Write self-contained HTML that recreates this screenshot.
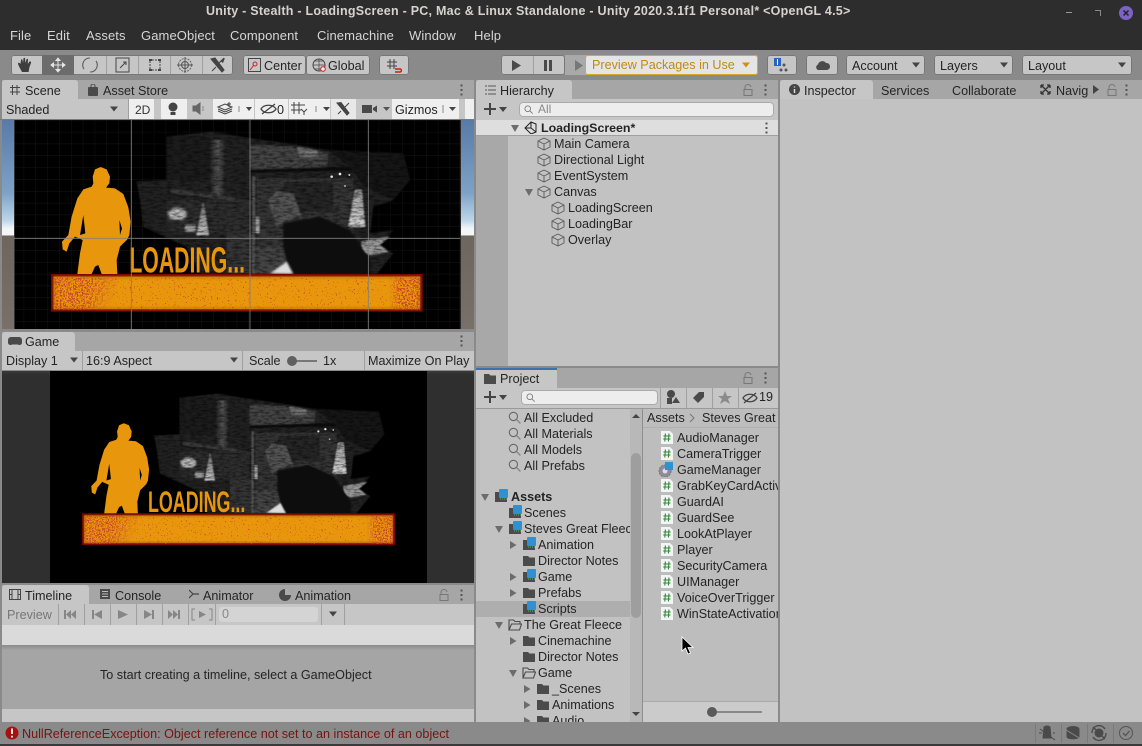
<!DOCTYPE html>
<html><head><meta charset="utf-8"><title>Unity - Stealth - LoadingScreen</title>
<style>
html,body{margin:0;padding:0;background:#8a8a8a}
#r{position:relative;width:1142px;height:746px;overflow:hidden;background:#8a8a8a;font-family:"Liberation Sans",sans-serif;font-size:12.6px;color:#242424}
#r div,#r span,#r svg{position:absolute}
.t{white-space:nowrap;line-height:16px}
.m{color:#d6d6d6;top:28px;font-size:13px;letter-spacing:.1px}
.b{background:#c6c6c6;border-radius:3px;box-shadow:0 0 0 1px #777 inset;height:20px;top:55px}
.ic{overflow:visible}
.tb{background:#a6a6a6}
.tab{background:#c6c6c6;border-radius:3px 3px 0 0}
.s{width:1px;background:#a0a0a0}
.w{background:#efefef}
</style></head><body><div id="r">
<svg width="0" height="0" style="left:0;top:0"><defs>
<symbol id="cube" viewBox="0 0 14 14"><path d="M7 1L13 4V10L7 13L1 10V4ZM1 4L7 7L13 4M7 7V13" fill="none" stroke="#5a5a5a" stroke-width=".9"/></symbol>
<symbol id="f" viewBox="0 0 14 14"><path d="M1 2H6L7.500 3.500H13V12H1Z" fill="#4b4b4b"/></symbol>
<symbol id="fo" viewBox="0 0 14 14"><path d="M1 12V2H5.500L7 3.500H12V6M1 12L3.500 6H13.500L11.500 12Z" fill="#c2c2c2" stroke="#4b4b4b" stroke-width="1.100"/></symbol>
<symbol id="fb" viewBox="0 0 14 14"><path d="M1 3H6L7 4H13V13H1Z" fill="#4b4b4b"/><rect x="5" y="0" width="9" height="9" rx="1" fill="#2f90d2"/><path d="M6 10H13" stroke="#55b060" stroke-dasharray="1 1"/></symbol>
<symbol id="sc" viewBox="0 0 12 13"><path d="M0 0H9L12 3V13H0Z" fill="#f4f4f4"/><path d="M4.400 2.500L3.800 10.500M8 2.500L7.400 10.500M2.400 5H9.600M2.200 8H9.400" stroke="#2c8a3c" stroke-width="1.100" fill="none"/></symbol>
<symbol id="mg" viewBox="0 0 12 12"><circle cx="5" cy="5" r="3.800" fill="none" stroke="#666"/><path d="M8 8L11.500 11.500" stroke="#888" stroke-width="1.300"/></symbol>
<symbol id="lock" viewBox="0 0 10 12"><path d="M2 5V3A3 2.500 0 0 1 8 3" fill="none" stroke="#777"/><rect x="1" y="5.500" width="8" height="6" fill="none" stroke="#777"/></symbol>
<symbol id="dots" viewBox="0 0 3 12"><path d="M.5 .5h2v2h-2zM.5 5h2v2h-2zM.5 9.500h2v2h-2z" fill="#555"/></symbol>
<symbol id="dn" viewBox="0 0 8 8"><path d="M0 1.500H8L4 6.500Z" fill="#444"/></symbol>
<symbol id="dg" viewBox="0 0 8 8"><path d="M0 1H8L4 8Z" fill="#6c6c6c"/></symbol>
<symbol id="rg" viewBox="0 0 8 8"><path d="M1 0V8L7.500 4Z" fill="#6c6c6c"/></symbol>
<pattern id="grid" width="35.500" height="35.500" patternUnits="userSpaceOnUse"><path d="M0 0V35.500M0 0H35.500" stroke="#1d1d1d" stroke-width="2" fill="none"/></pattern>
<filter id="sp" x="0" y="0" width="100%" height="100%"><feTurbulence type="fractalNoise" baseFrequency=".2" numOctaves="3" seed="4"/><feColorMatrix values="0 0 0 0 .58 0 0 0 0 .06 0 0 0 0 .02 0 0 0 30 -15.500"/></filter>
<filter id="sp2" x="0" y="0" width="100%" height="100%"><feTurbulence type="fractalNoise" baseFrequency=".18" numOctaves="3" seed="9"/><feColorMatrix values="0 0 0 0 .58 0 0 0 0 .06 0 0 0 0 .02 0 0 0 30 -21"/></filter>
<filter id="nz" x="0" y="0" width="100%" height="100%"><feTurbulence type="fractalNoise" baseFrequency=".05 .15" numOctaves="3" seed="2"/><feColorMatrix values="0 0 0 0 0 0 0 0 0 0 0 0 0 0 0 0 0 0 1.200 -.45"/></filter>
<filter id="bl"><feGaussianBlur stdDeviation="3"/></filter>
<filter id="bl2"><feGaussianBlur stdDeviation="2"/></filter>
<linearGradient id="col" x1="0" x2="1" y1="0" y2="0"><stop offset="0" stop-color="#222"/><stop offset=".5" stop-color="#555"/><stop offset="1" stop-color="#1e1e1e"/></linearGradient>
<linearGradient id="cone" x1="0" x2="0" y1="0" y2="1"><stop offset="0" stop-color="#666"/><stop offset="1" stop-color="#c4c4c4"/></linearGradient>
<linearGradient id="cone2" x1="0" x2="0" y1="0" y2="1"><stop offset="0" stop-color="#999"/><stop offset="1" stop-color="#d4d4d4"/></linearGradient>
<linearGradient id="lf" gradientUnits="userSpaceOnUse" x1="162" x2="345" y1="473" y2="540"><stop offset="0" stop-color="#fff"/><stop offset=".55" stop-color="#fff"/><stop offset="1" stop-color="#000"/></linearGradient>
<linearGradient id="rf" gradientUnits="userSpaceOnUse" x1="1165" x2="1200" y1="0" y2="0"><stop offset="0" stop-color="#000"/><stop offset="1" stop-color="#fff"/></linearGradient>
<mask id="ml" maskUnits="userSpaceOnUse" x="160" y="470" width="200" height="102"><rect x="160" y="470" width="200" height="102" fill="url(#lf)"/></mask>
<mask id="mr" maskUnits="userSpaceOnUse" x="1160" y="470" width="102" height="102"><rect x="1160" y="470" width="102" height="102" fill="url(#rf)"/></mask>
<g id="art">
<g filter="url(#bl2)">
<path d="M500 50L640 35L720 50L890 75L980 90L1210 100L1230 180L1180 240L1120 260L1110 340L1180 330L1140 375L1180 400L1130 462H600L560 380L430 320L420 240L410 185L500 180Z" fill="#222"/>
<rect x="500" y="50" width="130" height="130" fill="#1a1a1a"/>
<rect x="630" y="60" width="48" height="175" fill="url(#col)"/>
<path d="M750 75L900 80L985 100L980 140L750 150Z" fill="#444"/>
<path d="M890 82L950 92L960 112L900 110Z" fill="#777"/>
<rect x="770" y="175" width="290" height="205" fill="#343434"/>
<rect x="850" y="185" width="150" height="90" fill="#282828"/>
<path d="M750 148L1200 136V150L750 158Z" fill="#101010"/>
<path d="M985 90L1210 100L1230 180L1180 240L1090 200L1060 150Z" fill="#141414"/>
<path d="M510 205L720 235V245L510 218Z" fill="#3a3a3a"/>
<rect x="500" y="240" width="250" height="100" fill="#2e2e2e"/>
<rect x="680" y="340" width="80" height="122" fill="#343434"/>
<ellipse cx="532" cy="282" rx="28" ry="18" fill="#bbb" filter="url(#bl)"/>
<rect x="555" y="315" width="32" height="20" fill="#999"/>
<path d="M610 240L590 345H626Z" fill="url(#cone)"/>
<path d="M1065 210H1085L1095 320H1045Z" fill="url(#cone2)"/>
<rect x="757" y="170" width="8" height="292" fill="#5a5a5a"/>
<rect x="767" y="380" width="100" height="82" fill="#444"/>
<rect x="768" y="290" width="10" height="50" fill="#aaa"/>
<path d="M805 240L830 215L880 220L905 290L860 300L830 320Z" fill="#555"/>
<path d="M1085 365L1170 350L1140 375L1165 395L1110 405L1085 395Z" fill="#999"/>
</g>
<rect x="410" y="35" width="830" height="430" filter="url(#nz)"/>
<path d="M850 310L960 290L1050 330L1110 420V462H870L850 380Z" fill="#0a0a0a" filter="url(#bl2)"/>
<path d="M810 460L860 425L880 462Z" fill="#ddd" filter="url(#bl)"/>
<circle cx="995" cy="170" r="4" fill="#ddd"/><circle cx="1020" cy="162" r="4" fill="#eee"/><circle cx="1048" cy="165" r="3" fill="#ccc"/><circle cx="1035" cy="198" r="3" fill="#aaa"/>
<path d="M278 170L285 148L302 141L320 148L330 170L328 190L318 203L345 205L370 222L385 262L392 305L388 345L382 358L360 380L350 420L352 462H305L295 435L285 440L275 462H232L240 400L248 360L225 350L208 370L200 395L188 388L186 365L205 345L215 290L232 235L250 208L275 200L280 190Z" fill="#e8960c"/>
<path d="M250 285L256 340L240 345Z" fill="#000"/><path d="M358 300L366 325L360 345Z" fill="#000"/>
<rect x="157" y="466" width="1107" height="105" fill="#e8960c" stroke="#7c0500" stroke-width="8"/>
<rect x="163" y="472" width="1095" height="93" fill="none" stroke="#bb7a08" stroke-width="5" filter="url(#bl)"/>
<g mask="url(#ml)"><rect x="162" y="473" width="190" height="97" filter="url(#sp)"/></g>
<rect x="340" y="473" width="820" height="97" filter="url(#sp2)"/>
<g mask="url(#mr)"><rect x="1165" y="473" width="95" height="97" filter="url(#sp)"/></g>
</g>
</defs></svg>

<!-- title / menu -->
<div style="left:0;top:0;width:1142px;height:50px;background:#2d2d2d"></div>
<div class="t" style="left:206px;top:3px;width:644px;text-align:center;color:#d6d3ce;font-weight:bold;font-size:12.500px;letter-spacing:.24px">Unity - Stealth - LoadingScreen - PC, Mac &amp; Linux Standalone - Unity 2020.3.1f1 Personal* &lt;OpenGL 4.5&gt;</div>
<div style="left:1066px;top:12px;width:6px;height:1px;background:#999"></div>
<div style="left:1095px;top:10px;width:5px;height:5px;border-top:1px solid #888;border-right:1px solid #888"></div>
<div style="left:1119px;top:6px;width:14px;height:14px;border-radius:50%;background:#7b62c4"></div>
<svg style="left:1119px;top:6px" width="14" height="14"><path d="M4.500 4.500L9.500 9.500M9.500 4.500L4.500 9.500" stroke="#222" stroke-width="1.500"/></svg>
<div class="t m" style="left:10px">File</div><div class="t m" style="left:47px">Edit</div><div class="t m" style="left:86px">Assets</div><div class="t m" style="left:141px">GameObject</div><div class="t m" style="left:230px">Component</div><div class="t m" style="left:317px">Cinemachine</div><div class="t m" style="left:409px">Window</div><div class="t m" style="left:474px">Help</div>

<!-- main toolbar -->
<div class="b" style="left:11px;width:222px"></div>
<div style="left:42px;top:55px;width:32px;height:20px;background:#6c6c6c"></div>
<div class="s" style="left:106px;top:56px;height:18px"></div><div class="s" style="left:138px;top:56px;height:18px"></div><div class="s" style="left:170px;top:56px;height:18px"></div><div class="s" style="left:202px;top:56px;height:18px"></div>
<svg style="left:11px;top:55px" width="222" height="20">
<path d="M11 17C9 13 7 10 7 8.500C7 7.500 8.500 7.500 9.500 9L10 5C10 4 11.500 4 11.500 5L12 8L12.500 3.500C12.500 2.500 14 2.500 14 3.500L14.500 8L15.500 4.500C15.500 3.500 17 3.500 17 4.500L16.800 9L18.500 6.500C19.500 6 20.500 7 20 8L18.500 12C18 14 18 15.500 17.500 17Z" fill="#3d3d3d"/>
<path d="M47 3V17M40 10H54M47 3L45 5.500H49ZM47 17L45 14.500H49ZM40 10L42.500 8V12ZM54 10L51.500 8V12Z" stroke="#e6e6e6" fill="#e6e6e6"/>
<path d="M73 14A7 7 0 0 1 79 3M85 6A7 7 0 0 1 79 17" fill="none" stroke="#5c5c5c" stroke-width="1.100"/>
<path d="M105 3H118V17H105ZM109 13L115 7M112 7H115V10" fill="none" stroke="#444"/>
<path d="M138 4H141V6H138ZM147 4H150V6H147ZM138 14H141V16H138ZM147 14H150V16H147Z" fill="#444"/><path d="M141 5H147M141 15H147M139 6V14M149 6V14" stroke="#444" stroke-dasharray="2 1" fill="none"/>
<circle cx="174" cy="10" r="6.500" fill="none" stroke="#666" stroke-dasharray="2 1"/><circle cx="174" cy="10" r="3.500" fill="none" stroke="#555"/><path d="M174 2V18M166 10H182" stroke="#555"/>
<path d="M200 4L204 3L213 15L211 17ZM213 3L206 10M201 16L205 12" fill="#444" stroke="#444" stroke-width="1.100"/><path d="M209 6L214 3L212 8Z" fill="#444"/>
</svg>
<div class="b" style="left:243px;width:63px"></div><div class="b" style="left:306px;width:64px"></div>
<svg style="left:248px;top:58px" width="14" height="14"><rect x=".5" y=".5" width="12" height="13" fill="none" stroke="#444"/><circle cx="7" cy="6" r="2" fill="none" stroke="#c22"/><path d="M2 12L6 7" stroke="#c22"/></svg>
<div class="t" style="left:264px;top:58px">Center</div>
<svg style="left:312px;top:58px" width="15" height="15"><circle cx="7" cy="7" r="6" fill="none" stroke="#444"/><path d="M1 7H13M7 1V13M3 3H11M3 11H11" stroke="#444" fill="none" stroke-width=".7"/><circle cx="11" cy="11" r="2.300" fill="#eee" stroke="#c22"/></svg>
<div class="t" style="left:328px;top:58px">Global</div>
<div class="b" style="left:379px;width:30px"></div>
<svg style="left:386px;top:58px" width="16" height="15"><path d="M4 1V11M8 1V11M1 4H11M1 8H11" stroke="#444" fill="none"/><path d="M9 11H14M9 14H14A1.500 1.500 0 0 0 14 11" stroke="#c21" stroke-width="1.500" fill="none"/></svg>

<div class="b" style="left:501px;width:64px"></div><div class="s" style="left:533px;top:56px;height:18px"></div>
<svg style="left:511px;top:59px" width="46" height="13"><path d="M1 1V12L10 6.500Z" fill="#4a4a4a"/><path d="M33 1H36V12H33ZM38 1H41V12H38Z" fill="#4a4a4a"/></svg>
<div style="left:565px;top:55px;width:22px;height:20px;background:#a9a9a9"></div>
<svg style="left:575px;top:59px" width="10" height="13"><path d="M0 1V12L8 6.500Z" fill="#777"/></svg>
<div class="b" style="left:585px;width:173px;background:#e5e5e5;box-shadow:0 0 0 1px #dba531 inset"></div>
<div class="t" style="left:592px;top:57px;color:#c18a10">Preview Packages in Use</div>
<svg style="left:742px;top:61px" width="8" height="8"><path d="M0 1.500H8L4 6.500Z" fill="#d4900f"/></svg>
<div class="b" style="left:767px;width:30px"></div>
<svg style="left:773px;top:57px" width="18" height="16"><rect x="1" y="1" width="7" height="8" fill="#2a63c4"/><path d="M4.500 2V8" stroke="#fff"/><circle cx="11" cy="8" r="1.500" fill="#555"/><circle cx="8" cy="13" r="1.500" fill="#555"/><circle cx="13" cy="13" r="1.500" fill="#555"/></svg>
<div class="b" style="left:806px;width:32px"></div>
<svg style="left:815px;top:59px" width="15" height="12"><path d="M3 11A3 3 0 0 1 3 5.500A4.500 4.500 0 0 1 11 4A3.500 3.500 0 0 1 12 11Z" fill="#4a4a4a"/></svg>
<div class="b" style="left:846px;width:79px"></div><div class="t" style="left:852px;top:58px">Account</div><svg class="ic" style="left:912px;top:61px" width="8" height="8"><use href="#dn"/></svg>
<div class="b" style="left:934px;width:79px"></div><div class="t" style="left:940px;top:58px">Layers</div><svg class="ic" style="left:1000px;top:61px" width="8" height="8"><use href="#dn"/></svg>
<div class="b" style="left:1022px;width:110px"></div><div class="t" style="left:1028px;top:58px">Layout</div><svg class="ic" style="left:1118px;top:61px" width="8" height="8"><use href="#dn"/></svg>

<!-- Scene panel -->
<div class="tb" style="left:2px;top:80px;width:472px;height:19px"></div>
<div class="tab" style="left:2px;top:80px;width:76px;height:19px"></div>
<svg style="left:9px;top:84px" width="12" height="12"><path d="M3.500 1V11M8 1V11M1 3.500H11M1 8H11" stroke="#444" fill="none"/></svg>
<div class="t" style="left:25px;top:83px">Scene</div>
<svg style="left:88px;top:84px" width="10" height="12"><rect y="3" width="10" height="9" rx="1" fill="#4a4a4a"/><path d="M3 4V2A2 2 0 0 1 7 2V4" fill="none" stroke="#4a4a4a"/></svg>
<div class="t" style="left:103px;top:83px">Asset Store</div>
<svg style="left:460px;top:84px" width="3" height="12"><use href="#dots"/></svg>
<div style="left:2px;top:99px;width:472px;height:20px;background:#c6c6c6"></div>
<div class="t" style="left:6px;top:102px">Shaded</div><svg style="left:110px;top:105px" width="8" height="8"><use href="#dn"/></svg>
<div class="s" style="left:128px;top:99px;height:20px"></div>
<div class="w" style="left:129px;top:99px;width:25px;height:20px"></div><div class="t" style="left:135px;top:102px;font-size:12px;color:#333">2D</div>
<div class="w" style="left:161px;top:99px;width:26px;height:20px"></div>
<div class="w" style="left:213px;top:99px;width:41px;height:20px"></div>
<div class="w" style="left:255px;top:99px;width:33px;height:20px"></div>
<div class="w" style="left:289px;top:99px;width:41px;height:20px"></div>
<div style="left:331px;top:99px;width:25px;height:20px;background:#e8e8e8"></div>
<div class="w" style="left:392px;top:99px;width:67px;height:20px"></div>
<div class="w" style="left:465px;top:99px;width:9px;height:20px"></div>
<svg style="left:161px;top:99px" width="300" height="20">
<circle cx="12" cy="8" r="4.500" fill="#444"/><rect x="9.500" y="13" width="5" height="3" fill="#444"/>
<path d="M32 7H35L39 4V15L35 12H32Z" fill="#666" stroke="#666"/><path d="M42 7V12" stroke="#888"/>
<path d="M57 8L64 5L71 8L64 11ZM57 12L64 15L71 12M57 10L64 13L71 10" fill="none" stroke="#444"/><path d="M68 3V8M66 5H70" stroke="#444"/>
<path d="M78 7V13" stroke="#888"/><path d="M85 8H91L88 12Z" fill="#444"/>
<path d="M100 10C103 5 112 5 115 10C112 15 103 15 100 10ZM101 15L114 5" fill="none" stroke="#444" stroke-width="1.300"/>
<path d="M133 3V15M138 3V15M130 6H144M130 11H140M140 10L143 13V16M146 10L143 13" fill="none" stroke="#444"/>
<path d="M155 7V13" stroke="#888"/><path d="M162 8H169L165.500 12Z" fill="#444"/>
<path d="M176 4L180 3.500L188 14L186 16ZM188 4L182 10M177 15L180 12" fill="#444" stroke="#444"/>
<path d="M201 6H211V14H201ZM212 9L216 6.500V13.500L212 11Z" fill="#4a4a4a"/><path d="M222 8H229L225.500 12Z" fill="#555"/>
<path d="M282 6V14" stroke="#888"/><path d="M288 8H295L291.500 12Z" fill="#444"/>
</svg>
<div class="t" style="left:277px;top:102px">0</div>
<div class="t" style="left:395px;top:102px">Gizmos</div>
<div style="left:0;top:119px;width:476px;height:1px;background:#7a7a7a"></div>
<div style="left:2px;top:120px;width:472px;height:209px;background:linear-gradient(#587aa8 0,#7ea2c6 35%,#bcd6ea 48%,#f2f6f8 52%,#f4f6f6 55%,#6e655f 55.500%,#7a706a 100%);overflow:hidden"></div>
<svg style="left:14px;top:120px" width="447" height="209"><rect width="447" height="209" fill="#000"/></svg>
<svg style="left:2px;top:120px" width="472" height="209" viewBox="6 0 1416 627"><clipPath id="cs"><rect x="42" y="0" width="1339" height="627"/></clipPath><g clip-path="url(#cs)">
<rect x="42" y="0" width="1339" height="627" fill="url(#grid)"/>
<use href="#art"/>
<text x="388" y="458" font-family="Liberation Sans" font-weight="bold" font-size="107" fill="#e8960c" textLength="347" lengthAdjust="spacingAndGlyphs">LOADING...</text>
<path d="M42 0V627M394 0V627M750 0V627M1105 0V627M1381 0V627M42 355H1381" stroke="#808080" stroke-width="2.400" fill="none"/></g></svg>

<!-- Game panel -->
<div style="left:0;top:329px;width:476px;height:3px;background:#8a8a8a"></div>
<div class="tb" style="left:2px;top:332px;width:472px;height:19px"></div>
<div class="tab" style="left:2px;top:332px;width:73px;height:19px"></div>
<svg style="left:8px;top:336px" width="14" height="11"><path d="M3 1H11A3 3 0 0 1 14 4V7A2.500 2.500 0 0 1 10 8.500H4A2.500 2.500 0 0 1 0 7V4A3 3 0 0 1 3 1Z" fill="#4a4a4a"/></svg>
<div class="t" style="left:25px;top:334px">Game</div>
<svg style="left:460px;top:335px" width="3" height="12"><use href="#dots"/></svg>
<div style="left:2px;top:351px;width:472px;height:19px;background:#c6c6c6"></div>
<div class="t" style="left:6px;top:353px">Display 1</div><svg style="left:70px;top:356px" width="8" height="8"><use href="#dn"/></svg>
<div class="s" style="left:82px;top:351px;height:19px"></div>
<div class="t" style="left:86px;top:353px">16:9 Aspect</div><svg style="left:230px;top:356px" width="8" height="8"><use href="#dn"/></svg>
<div class="s" style="left:242px;top:351px;height:19px"></div>
<div class="t" style="left:249px;top:353px">Scale</div>
<div style="left:292px;top:360px;width:25px;height:2px;background:#777"></div><div style="left:287px;top:356px;width:10px;height:10px;border-radius:50%;background:#606060"></div>
<div class="t" style="left:323px;top:353px">1x</div>
<div class="s" style="left:364px;top:351px;height:19px"></div>
<div class="t" style="left:368px;top:353px">Maximize On Play</div>
<div style="left:2px;top:371px;width:472px;height:212px;background:#2f2f2f"></div>
<div style="left:2px;top:371px;width:472px;height:4px;background:linear-gradient(#3a3a3a,#2f2f2f)"></div>
<svg style="left:50px;top:371px" width="377" height="212"><rect width="377" height="212" fill="#000"/></svg>
<svg style="left:0;top:0" width="476" height="583" viewBox="0 0 476 583"><g transform="translate(39.060 383.670) scale(.2807)"><use href="#art"/>
<text x="388" y="458" font-family="Liberation Sans" font-weight="bold" font-size="107" fill="#e8960c" textLength="347" lengthAdjust="spacingAndGlyphs">LOADING...</text></g></svg>

<!-- Timeline -->
<div style="left:0;top:583px;width:476px;height:2px;background:#8a8a8a"></div>
<div class="tb" style="left:2px;top:585px;width:472px;height:19px"></div>
<div class="tab" style="left:2px;top:585px;width:87px;height:19px"></div>
<svg style="left:9px;top:589px" width="12" height="11"><path d="M.5.5H11.500V10.500H.5ZM3 .5V10.500M9 .5V10.500M.5 5.500H3M9 5.500H11.500" fill="none" stroke="#444"/></svg>
<div class="t" style="left:25px;top:588px">Timeline</div>
<svg style="left:100px;top:589px" width="10" height="11"><rect width="10" height="10" fill="#4a4a4a"/><path d="M2 2.500H8M2 5H8M2 7.500H8" stroke="#bbb"/></svg>
<div class="t" style="left:115px;top:588px">Console</div>
<svg style="left:189px;top:589px" width="11" height="10"><path d="M0 1L4 5L0 9M4 5H10" fill="none" stroke="#444" stroke-width="1.200"/></svg>
<div class="t" style="left:203px;top:588px">Animator</div>
<svg style="left:279px;top:589px" width="12" height="12"><circle cx="6" cy="6" r="6" fill="#4a4a4a"/><path d="M6 6V0H8A6 6 0 0 1 12 6Z" fill="#aaa"/></svg>
<div class="t" style="left:295px;top:588px">Animation</div>
<svg style="left:439px;top:589px" width="10" height="12"><use href="#lock"/></svg>
<svg style="left:460px;top:589px" width="3" height="12"><use href="#dots"/></svg>
<div style="left:2px;top:604px;width:472px;height:21px;background:#c6c6c6"></div>
<div class="t" style="left:7px;top:607px;color:#777">Preview</div>
<div class="s" style="left:58px;top:604px;height:21px"></div><div class="s" style="left:84px;top:604px;height:21px"></div><div class="s" style="left:110px;top:604px;height:21px"></div><div class="s" style="left:136px;top:604px;height:21px"></div><div class="s" style="left:162px;top:604px;height:21px"></div><div class="s" style="left:188px;top:604px;height:21px"></div><div class="s" style="left:215px;top:604px;height:21px"></div><div class="s" style="left:321px;top:604px;height:21px"></div><div class="s" style="left:344px;top:604px;height:21px"></div>
<svg style="left:58px;top:604px" width="160" height="21" fill="#868686"><path d="M6 6H8V15H6ZM8 10.500L13 6V15ZM13 10.500L18 6V15Z"/><path d="M34 6H36V15H34ZM36 10.500L44 6V15Z"/><path d="M60 6L70 10.500L60 15Z"/><path d="M86 6L94 10.500L86 15ZM94 6H96V15H94Z"/><path d="M110 6L115 10.500L110 15ZM115 6L120 10.500L115 15ZM120 6H122V15H120Z"/><path d="M137 5H134V16H137M151 5H154V16H151" fill="none" stroke="#868686"/><path d="M141 7L148 10.500L141 14Z"/></svg>
<div style="left:219px;top:607px;width:99px;height:15px;background:#d4d4d4;border-radius:3px"></div>
<div class="t" style="left:222px;top:606px;color:#888">0</div>
<svg style="left:329px;top:610px" width="8" height="8"><use href="#dn"/></svg>
<div style="left:2px;top:625px;width:472px;height:20px;background:#dadada"></div>
<div style="left:2px;top:645px;width:472px;height:64px;background:#a5a5a5"></div>
<div style="left:2px;top:645px;width:472px;height:5px;background:linear-gradient(#8a8a8a,#a5a5a5)"></div>
<div style="left:2px;top:709px;width:472px;height:13px;background:#c6c6c6"></div>
<div class="t" style="left:100px;top:667px">To start creating a timeline, select a GameObject</div>

<!-- Hierarchy -->
<div class="tb" style="left:476px;top:80px;width:302px;height:19px"></div>
<div class="tab" style="left:476px;top:80px;width:96px;height:19px"></div>
<svg style="left:485px;top:85px" width="11" height="10"><path d="M3 1H11M3 5H11M3 9H11M0 1H2M0 5H2M0 9H2" stroke="#555"/></svg>
<div class="t" style="left:500px;top:83px">Hierarchy</div>
<svg style="left:743px;top:84px" width="10" height="12"><use href="#lock"/></svg>
<svg style="left:764px;top:84px" width="3" height="12"><use href="#dots"/></svg>
<div style="left:476px;top:99px;width:302px;height:21px;background:#c6c6c6"></div>
<svg style="left:483px;top:102px" width="30" height="14"><path d="M7 1V13M1 7H13" stroke="#444" stroke-width="2"/><path d="M16 5H24L20 10Z" fill="#444"/></svg>
<div style="left:519px;top:102px;width:255px;height:15px;background:#ededed;border-radius:4px;box-shadow:0 0 0 1px #aaa inset"></div>
<svg style="left:524px;top:105px" width="9" height="9"><use href="#mg"/></svg>
<div class="t" style="left:538px;top:101px;color:#8a8a8a;font-size:12px">All</div>
<div style="left:476px;top:120px;width:302px;height:16px;background:#dedede"></div>
<div style="left:476px;top:136px;width:32px;height:230px;background:#a8a8a8"></div>
<div style="left:508px;top:136px;width:270px;height:230px;background:#c2c2c2"></div>
<div style="left:476px;top:135px;width:302px;height:1px;background:#a0a0a0"></div>
<svg style="left:511px;top:124px" width="8" height="8"><use href="#dg"/></svg>
<svg style="left:524px;top:121px" width="13" height="13"><path d="M1 7L7 1L12 3V11L7 13ZM7 1V7H1M7 7L12 11" fill="none" stroke="#222"/></svg>
<div class="t" style="left:541px;top:120px;font-weight:bold;font-size:12.400px">LoadingScreen*</div>
<svg style="left:765px;top:122px" width="3" height="12"><use href="#dots"/></svg>
<svg style="left:537px;top:137px" width="14" height="14"><use href="#cube"/></svg><div class="t" style="left:554px;top:136px">Main Camera</div>
<svg style="left:537px;top:153px" width="14" height="14"><use href="#cube"/></svg><div class="t" style="left:554px;top:152px">Directional Light</div>
<svg style="left:537px;top:169px" width="14" height="14"><use href="#cube"/></svg><div class="t" style="left:554px;top:168px">EventSystem</div>
<svg style="left:525px;top:188px" width="8" height="8"><use href="#dg"/></svg><svg style="left:537px;top:185px" width="14" height="14"><use href="#cube"/></svg><div class="t" style="left:554px;top:184px">Canvas</div>
<svg style="left:551px;top:201px" width="14" height="14"><use href="#cube"/></svg><div class="t" style="left:568px;top:200px">LoadingScreen</div>
<svg style="left:551px;top:217px" width="14" height="14"><use href="#cube"/></svg><div class="t" style="left:568px;top:216px">LoadingBar</div>
<svg style="left:551px;top:233px" width="14" height="14"><use href="#cube"/></svg><div class="t" style="left:568px;top:232px">Overlay</div>

<!-- Project -->
<div class="tb" style="left:476px;top:368px;width:302px;height:20px"></div>
<div class="tab" style="left:476px;top:368px;width:81px;height:20px"></div>
<div style="left:476px;top:368px;width:81px;height:2px;background:#3a72b0"></div>
<svg style="left:483px;top:372px" width="14" height="14"><use href="#f"/></svg>
<div class="t" style="left:500px;top:371px">Project</div>
<svg style="left:743px;top:372px" width="10" height="12"><use href="#lock"/></svg>
<svg style="left:764px;top:372px" width="3" height="12"><use href="#dots"/></svg>
<div style="left:476px;top:388px;width:302px;height:20px;background:#c6c6c6"></div>
<svg style="left:483px;top:390px" width="30" height="14"><path d="M7 1V13M1 7H13" stroke="#444" stroke-width="2"/><path d="M16 5H24L20 10Z" fill="#444"/></svg>
<div style="left:521px;top:390px;width:137px;height:15px;background:#ededed;border-radius:4px;box-shadow:0 0 0 1px #aaa inset"></div>
<svg style="left:526px;top:393px" width="9" height="9"><use href="#mg"/></svg>
<div class="s" style="left:660px;top:388px;height:20px"></div><div class="s" style="left:686px;top:388px;height:20px"></div><div class="s" style="left:712px;top:388px;height:20px"></div><div class="s" style="left:738px;top:388px;height:20px"></div>
<svg style="left:666px;top:389px" width="112" height="18"><circle cx="5" cy="5" r="4" fill="#4a4a4a"/><rect x="1" y="9" width="5" height="6" fill="#4a4a4a"/><path d="M6 14L10 8L14 14Z" fill="#4a4a4a"/>
<path d="M27 9L33 3H38V8L32 14Z" fill="#4a4a4a"/>
<path d="M59 2L61 7H66L62 10L64 15L59 12L54 15L56 10L52 7H57Z" fill="#8a8a8a"/>
<path d="M77 9C80 4 88 4 91 9C88 14 80 14 77 9ZM78 14L90 4" fill="none" stroke="#444" stroke-width="1.300"/></svg>
<div class="t" style="left:759px;top:389px">19</div>
<div style="left:476px;top:408px;width:302px;height:1px;background:#999"></div>

<div style="left:476px;top:409px;width:154px;height:313px;background:#c2c2c2;overflow:hidden" id="tree">
<svg style="left:32px;top:2px" width="13" height="13"><use href="#mg"/></svg><div class="t" style="left:48px;top:1px">All Excluded</div>
<svg style="left:32px;top:18px" width="13" height="13"><use href="#mg"/></svg><div class="t" style="left:48px;top:17px">All Materials</div>
<svg style="left:32px;top:34px" width="13" height="13"><use href="#mg"/></svg><div class="t" style="left:48px;top:33px">All Models</div>
<svg style="left:32px;top:50px" width="13" height="13"><use href="#mg"/></svg><div class="t" style="left:48px;top:49px">All Prefabs</div>
<svg style="left:5px;top:84px" width="8" height="8"><use href="#dg"/></svg><svg style="left:18px;top:80px" width="14" height="14"><use href="#fb"/></svg><div class="t" style="left:35px;top:80px;font-weight:bold">Assets</div>
<svg style="left:32px;top:96px" width="14" height="14"><use href="#fb"/></svg><div class="t" style="left:48px;top:96px">Scenes</div>
<svg style="left:19px;top:116px" width="8" height="8"><use href="#dg"/></svg><svg style="left:32px;top:112px" width="14" height="14"><use href="#fb"/></svg><div class="t" style="left:48px;top:112px">Steves Great Fleece</div>
<svg style="left:33px;top:132px" width="8" height="8"><use href="#rg"/></svg><svg style="left:46px;top:128px" width="14" height="14"><use href="#fb"/></svg><div class="t" style="left:62px;top:128px">Animation</div>
<svg style="left:46px;top:145px" width="14" height="14"><use href="#f"/></svg><div class="t" style="left:62px;top:144px">Director Notes</div>
<svg style="left:33px;top:164px" width="8" height="8"><use href="#rg"/></svg><svg style="left:46px;top:160px" width="14" height="14"><use href="#fb"/></svg><div class="t" style="left:62px;top:160px">Game</div>
<svg style="left:33px;top:180px" width="8" height="8"><use href="#rg"/></svg><svg style="left:46px;top:177px" width="14" height="14"><use href="#f"/></svg><div class="t" style="left:62px;top:176px">Prefabs</div>
<div style="left:0;top:192px;width:154px;height:16px;background:#aeaeae"></div>
<svg style="left:46px;top:192px" width="14" height="14"><use href="#fb"/></svg><div class="t" style="left:62px;top:192px">Scripts</div>
<svg style="left:19px;top:212px" width="8" height="8"><use href="#dg"/></svg><svg style="left:32px;top:209px" width="14" height="14"><use href="#fo"/></svg><div class="t" style="left:48px;top:208px">The Great Fleece</div>
<svg style="left:33px;top:228px" width="8" height="8"><use href="#rg"/></svg><svg style="left:46px;top:225px" width="14" height="14"><use href="#f"/></svg><div class="t" style="left:62px;top:224px">Cinemachine</div>
<svg style="left:46px;top:241px" width="14" height="14"><use href="#f"/></svg><div class="t" style="left:62px;top:240px">Director Notes</div>
<svg style="left:33px;top:260px" width="8" height="8"><use href="#dg"/></svg><svg style="left:46px;top:257px" width="14" height="14"><use href="#fo"/></svg><div class="t" style="left:62px;top:256px">Game</div>
<svg style="left:47px;top:276px" width="8" height="8"><use href="#rg"/></svg><svg style="left:60px;top:273px" width="14" height="14"><use href="#f"/></svg><div class="t" style="left:76px;top:272px">_Scenes</div>
<svg style="left:47px;top:292px" width="8" height="8"><use href="#rg"/></svg><svg style="left:60px;top:289px" width="14" height="14"><use href="#f"/></svg><div class="t" style="left:76px;top:288px">Animations</div>
<svg style="left:47px;top:308px" width="8" height="8"><use href="#rg"/></svg><svg style="left:60px;top:305px" width="14" height="14"><use href="#f"/></svg><div class="t" style="left:76px;top:304px">Audio</div>
</div>
<div style="left:630px;top:409px;width:12px;height:313px;background:#b8b8b8"></div>
<div style="left:631px;top:453px;width:10px;height:165px;background:#9e9e9e;border-radius:5px"></div>
<svg style="left:632px;top:412px" width="8" height="8"><path d="M0 6H8L4 2Z" fill="#444"/></svg>
<svg style="left:632px;top:710px" width="8" height="8"><path d="M0 2H8L4 6Z" fill="#444"/></svg>
<div style="left:642px;top:409px;width:1px;height:313px;background:#8e8e8e"></div>
<div style="left:643px;top:409px;width:135px;height:292px;background:#bdbdbd;overflow:hidden">
<div class="t" style="left:4px;top:1px">Assets</div><svg style="left:46px;top:4px" width="7" height="10"><path d="M1 1L5 5L1 9" fill="none" stroke="#777"/></svg><div class="t" style="left:59px;top:1px">Steves Great Fleece</div>
<div style="left:0;top:19px;width:135px;height:273px;overflow:hidden">
<svg style="left:18px;top:3px" width="12" height="13"><use href="#sc"/></svg><div class="t" style="left:34px;top:2px">AudioManager</div>
<svg style="left:18px;top:19px" width="12" height="13"><use href="#sc"/></svg><div class="t" style="left:34px;top:18px">CameraTrigger</div>
<svg style="left:15px;top:34px" width="16" height="15"><circle cx="7" cy="9" r="6" fill="#8c8c9c" stroke="#777" stroke-dasharray="2 1"/><circle cx="7" cy="9" r="2.500" fill="#ddd"/><rect x="7" y="0" width="8" height="8" fill="#2f90d2"/></svg><div class="t" style="left:34px;top:34px">GameManager</div>
<svg style="left:18px;top:51px" width="12" height="13"><use href="#sc"/></svg><div class="t" style="left:34px;top:50px">GrabKeyCardActivation</div>
<svg style="left:18px;top:67px" width="12" height="13"><use href="#sc"/></svg><div class="t" style="left:34px;top:66px">GuardAI</div>
<svg style="left:18px;top:83px" width="12" height="13"><use href="#sc"/></svg><div class="t" style="left:34px;top:82px">GuardSee</div>
<svg style="left:18px;top:99px" width="12" height="13"><use href="#sc"/></svg><div class="t" style="left:34px;top:98px">LookAtPlayer</div>
<svg style="left:18px;top:115px" width="12" height="13"><use href="#sc"/></svg><div class="t" style="left:34px;top:114px">Player</div>
<svg style="left:18px;top:131px" width="12" height="13"><use href="#sc"/></svg><div class="t" style="left:34px;top:130px">SecurityCamera</div>
<svg style="left:18px;top:147px" width="12" height="13"><use href="#sc"/></svg><div class="t" style="left:34px;top:146px">UIManager</div>
<svg style="left:18px;top:163px" width="12" height="13"><use href="#sc"/></svg><div class="t" style="left:34px;top:162px">VoiceOverTrigger</div>
<svg style="left:18px;top:179px" width="12" height="13"><use href="#sc"/></svg><div class="t" style="left:34px;top:178px">WinStateActivation</div>
</div></div>
<div style="left:643px;top:427px;width:135px;height:1px;background:#b0b0b0"></div>
<div style="left:643px;top:701px;width:135px;height:21px;background:#cbcbcb;box-shadow:0 1px 0 #aaa inset"></div>
<div style="left:712px;top:711px;width:50px;height:2px;background:#888"></div><div style="left:707px;top:707px;width:10px;height:10px;border-radius:50%;background:#5a5a5a"></div>
<svg style="left:681px;top:636px" width="14" height="21"><path d="M1 1V15L4.500 12L7 18L9.500 17L7 11.500H12Z" fill="#000" stroke="#fff" stroke-width=".8"/></svg>

<!-- Inspector -->
<div class="tb" style="left:780px;top:80px;width:362px;height:19px"></div>
<div class="tab" style="left:780px;top:80px;width:93px;height:19px"></div>
<svg style="left:789px;top:84px" width="11" height="11"><circle cx="5.500" cy="5.500" r="5.500" fill="#444"/><path d="M5.500 2.500V3.500M5.500 5V9" stroke="#ddd" stroke-width="1.500"/></svg>
<div class="t" style="left:804px;top:83px">Inspector</div>
<div class="t" style="left:881px;top:83px">Services</div>
<div class="t" style="left:952px;top:83px">Collaborate</div>
<svg style="left:1040px;top:84px" width="11" height="11"><path d="M1 1L10 10M10 1L1 10M1 1H4M1 1V4M10 1H7M10 1V4M1 10H4M1 10V7M10 10H7M10 10V7" stroke="#333" stroke-width="1.300" fill="none"/></svg>
<div class="t" style="left:1056px;top:83px;width:32px;overflow:hidden">Navigation</div>
<svg style="left:1092px;top:85px" width="8" height="9"><path d="M1 0V9L7 4.500Z" fill="#444"/></svg>
<svg style="left:1107px;top:84px" width="10" height="12"><use href="#lock"/></svg>
<svg style="left:1125px;top:84px" width="3" height="12"><use href="#dots"/></svg>
<div style="left:780px;top:99px;width:362px;height:623px;background:#c2c2c2"></div>

<!-- status bar -->
<div style="left:0;top:722px;width:1142px;height:22px;background:#8a8a8a"></div>
<div style="left:0;top:744px;width:1142px;height:2px;background:#3a3a3a"></div>
<svg style="left:5px;top:726px" width="14" height="14"><circle cx="7" cy="7" r="6.500" fill="#a81010"/><path d="M7 2.500V8M7 9.800V11.500" stroke="#fff" stroke-width="1.800"/></svg>
<div class="t" style="left:22px;top:726px;color:#7a1212">NullReferenceException: Object reference not set to an instance of an object</div>
<div class="s" style="left:1035px;top:724px;height:19px;background:#7a7a7a"></div><div class="s" style="left:1061px;top:724px;height:19px;background:#7a7a7a"></div><div class="s" style="left:1087px;top:724px;height:19px;background:#7a7a7a"></div><div class="s" style="left:1113px;top:724px;height:19px;background:#7a7a7a"></div>
<svg style="left:1036px;top:724px" width="104" height="18">
<path d="M8 3A5 5 0 0 1 14 3L15 14H7ZM4 5L19 16M6 9H3M17 9H19" fill="#4a4a4a" stroke="#4a4a4a"/>
<ellipse cx="37" cy="5" rx="6.500" ry="3" fill="#4a4a4a"/><path d="M30.500 6V13C31 16 43 16 43.500 13V6" fill="#4a4a4a"/><path d="M30 6L45 15" stroke="#8a8a8a"/>
<circle cx="63" cy="9" r="4.500" fill="#4a4a4a"/><path d="M56 9A7 7 0 0 1 69 5M70 9A7 7 0 0 1 57 13M57 3L69 15" fill="none" stroke="#4a4a4a" stroke-width="1.300"/>
<circle cx="90" cy="9" r="6.500" fill="none" stroke="#555"/><path d="M87 9L89.500 11.500L93.500 7" fill="none" stroke="#555" stroke-width="1.300"/>
</svg>
<div style="left:474px;top:80px;width:2px;height:642px;background:#8a8a8a"></div>
<div style="left:778px;top:80px;width:2px;height:642px;background:#8a8a8a"></div>
<div style="left:476px;top:366px;width:302px;height:2px;background:#8a8a8a"></div>
</div></body></html>
